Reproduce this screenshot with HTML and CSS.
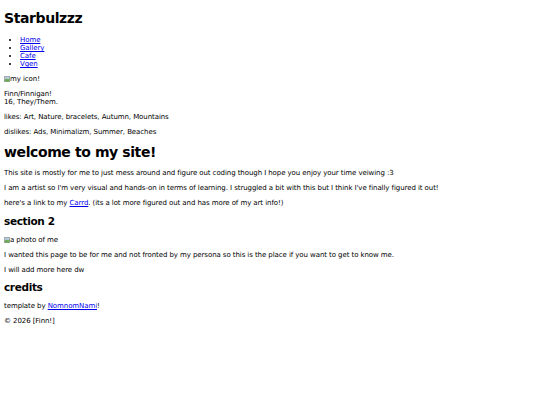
FILE: index.html
```html
<!DOCTYPE html>
<html>
<head>
<meta charset="utf-8">
<title>Starbulzzz</title>
<link rel="stylesheet" href="styles.css">
</head>
<body>
<h1 class="title">Starbulzzz</h1>
<ul class="nav">
  <li><a href="#">Home</a></li>
  <li><a href="#">Gallery</a></li>
  <li><a href="#">Cafe</a></li>
  <li><a href="#">Vgen</a></li>
</ul>
<p class="img"><svg class="broken" viewBox="0 0 6 6" width="6" height="6"><rect x="0" y="0" width="6" height="6" fill="#dfe7ee"/><rect x="0.5" y="0.5" width="5" height="5" fill="#b9cde0" stroke="#a0a8b0" stroke-width="1"/><path d="M0.5 5.5v-1.5l2-1.5 1.5 1 1.5-1v3z" fill="#6aa84f"/></svg>my icon!</p>
<p>Finn/Finnigan!<br>16, They/Them.</p>
<p>likes: Art, Nature, bracelets, Autumn, Mountains</p>
<p>dislikes: Ads, Minimalizm, Summer, Beaches</p>
<h1 class="welcome">welcome to my site!</h1>
<p>This site is mostly for me to just mess around and figure out coding though I hope you enjoy your time veiwing :3</p>
<p>I am a artist so I'm very visual and hands-on in terms of learning. I struggled a bit with this but I think I've finally figured it out!</p>
<p>here's a link to my <a href="#">Carrd</a>. (its a lot more figured out and has more of my art info!)</p>
<h2 class="sec">section 2</h2>
<p class="img"><svg class="broken" viewBox="0 0 6 6" width="6" height="6"><rect x="0" y="0" width="6" height="6" fill="#dfe7ee"/><rect x="0.5" y="0.5" width="5" height="5" fill="#b9cde0" stroke="#a0a8b0" stroke-width="1"/><path d="M0.5 5.5v-1.5l2-1.5 1.5 1 1.5-1v3z" fill="#6aa84f"/></svg>a photo of me</p>
<p>I wanted this page to be for me and not fronted by my persona so this is the place if you want to get to know me.</p>
<p>I will add more here dw</p>
<h2 class="credits">credits</h2>
<p>template by <a href="#">NomnomNami</a>!</p>
<p>© 2026 [Finn!]</p>
</body>
</html>
```
FILE: styles.css
```css
html { background: #fff; }
body {
  margin: 4px;
  font-family: "DejaVu Sans", Verdana, sans-serif;
  font-size: 7px;
  letter-spacing: -0.08px;
  color: #000;
}
h1 {
  font-size: 14px;
  letter-spacing: -0.4px;
}
.title { margin: 6px 0 10px; }
.welcome { margin: 8px 0 9px; }
h2 {
  font-size: 10.5px;
  letter-spacing: -0.35px;
}
.sec { margin: 8px 0 9px; }
.credits { margin: 7px 0 9px; }
p { margin: 7px 0; }
a { color: #0000ee; }
.nav {
  margin: 7px 0 6px;
  padding-left: 16px;
}
.broken { vertical-align: -1px; }
```
